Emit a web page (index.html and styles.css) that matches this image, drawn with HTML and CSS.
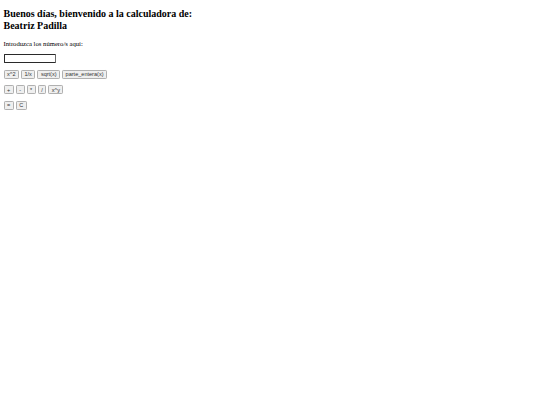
FILE: index.html
```html
<!DOCTYPE html>
<html lang="es">
<head>
<meta charset="utf-8">
<title>Calculadora</title>
<link rel="stylesheet" href="styles.css">
</head>
<body class="page">
<h2 class="title">Buenos días, bienvenido a la calculadora de:<br>Beatriz Padilla</h2>
<p class="label">Introduzca los número/s aquí:</p>
<div class="row row-input"><input class="field" type="text"></div>
<div class="row row-first">
<button class="btn">x^2</button>
<button class="btn">1/x</button>
<button class="btn">sqrt(x)</button>
<button class="btn">parte_entera(x)</button>
</div>
<div class="row">
<button class="btn">+</button>
<button class="btn">-</button>
<button class="btn">*</button>
<button class="btn">/</button>
<button class="btn">x^y</button>
</div>
<div class="row">
<button class="btn">=</button>
<button class="btn">C</button>
</div>
</body>
</html>
```
FILE: styles.css
```css
html {
  background: #ffffff;
}
.page {
  margin: 0;
  padding: 0 3.5px;
  font-family: "Liberation Serif", "Times New Roman", serif;
  font-size: 6.67px;
  color: #000000;
}
.title {
  font-size: 10px;
  line-height: 11.6px;
  font-weight: bold;
  margin: 8.2px 0 8.3px;
}
.label {
  margin: 0;
  line-height: 7.4px;
}
.row {
  display: flex;
  gap: 2px;
  margin-top: 6.5px;
}
.row-input {
  margin-top: 7px;
}
.row-first {
  margin-top: 6.5px;
}
.field {
  box-sizing: border-box;
  width: 52px;
  height: 9px;
  margin: 0;
  padding: 0;
  border: 1px solid #2a2a2a;
  border-right-color: #6a6a6a;
  border-radius: 1px;
  background: #ffffff;
  font-size: 5.56px;
}
.btn {
  box-sizing: border-box;
  height: 9px;
  margin: 0;
  padding: 0 2.5px;
  font-family: "Liberation Sans", Arial, sans-serif;
  font-size: 5.56px;
  line-height: 6px;
  border: 1px solid #b0b0b0;
  border-radius: 1.2px;
  background: #efefef;
  color: #333333;
}
```
